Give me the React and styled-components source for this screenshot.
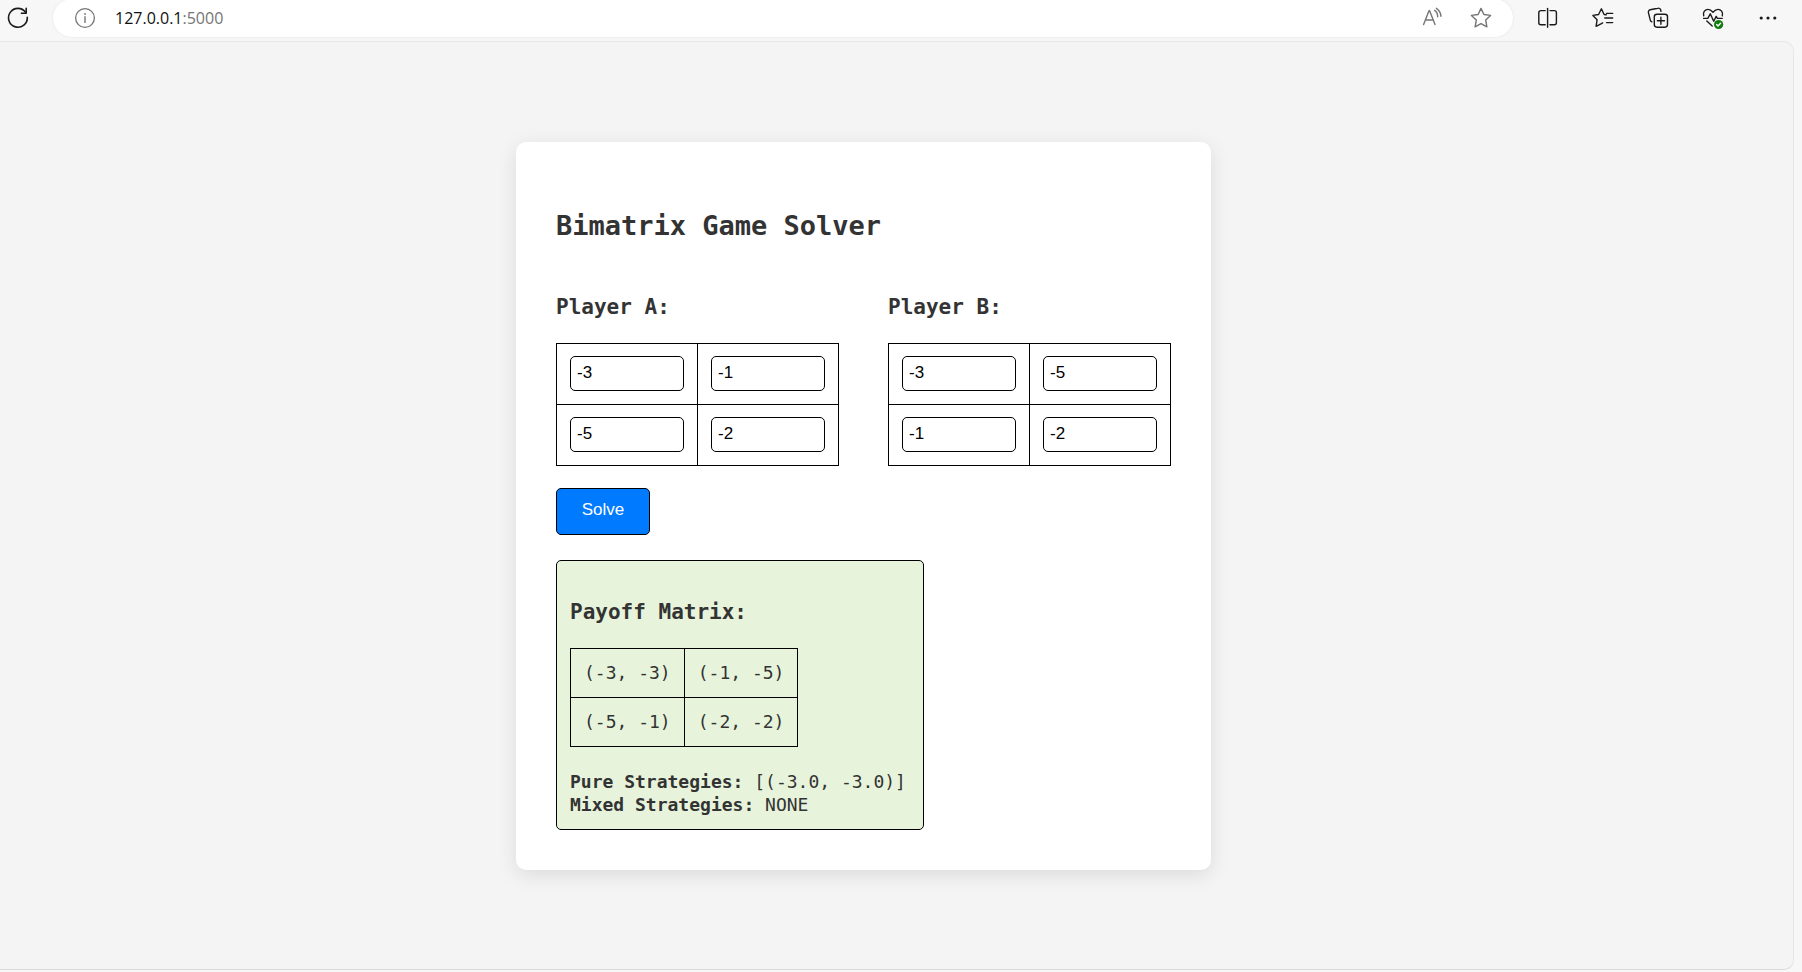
import React, { useState } from "react";
import styled, { createGlobalStyle } from "styled-components";

const GlobalStyle = createGlobalStyle`
  *, *::before, *::after { box-sizing: border-box; }
  body {
    margin: 0;
    background: #f7f7f7;
    color: #333;
    font-family: "DejaVu Sans Mono", "Liberation Mono", monospace;
    font-size: 18px;
    line-height: 23px;
  }
`;

const Browser = styled.div`
  display: flex;
  flex-direction: column;
  min-height: 100vh;
  padding-bottom: 2px;
`;

const Toolbar = styled.header`
  display: flex;
  align-items: center;
  height: 41px;
  padding: 0 7px 5px 0;
`;

const IconButton = styled.button`
  display: flex;
  align-items: center;
  justify-content: center;
  flex: none;
  width: ${(p) => p.$width}px;
  height: 24px;
  padding: 0;
  border: 0;
  background: none;
  color: ${(p) => (p.$muted ? "#757575" : "#1b1b1b")};
`;

const Icon = styled.svg.attrs({ viewBox: "0 0 24 24", "aria-hidden": true })`
  flex: none;
  width: 24px;
  height: 24px;
  overflow: visible;
  fill: none;
  stroke: currentColor;
  stroke-width: 1.4;
  stroke-linecap: round;
  stroke-linejoin: round;
`;

const AddressBar = styled.div`
  display: flex;
  flex: 1;
  align-items: center;
  gap: 26px;
  height: 38px;
  margin: 0 7px 0 17px;
  padding: 0 20px;
  border-radius: 19px;
  background: #fff;
  box-shadow: 0 0 3px rgba(0, 0, 0, 0.08);
`;

const Address = styled.div`
  display: flex;
  flex: 1;
  align-items: center;
  gap: 18px;
  font-family: "Open Sans", "Noto Sans", sans-serif;
  font-size: 16px;
  color: #757575;
`;

const Host = styled.span`
  color: #111;
`;

const Viewport = styled.main`
  display: flex;
  flex: 1;
  align-items: center;
  justify-content: center;
  margin-right: 8px;
  padding: 24px 66px 24px 0;
  border: 1px solid #e6e6e6;
  border-bottom: 1px solid #d9d9d9;
  border-left: 0;
  border-radius: 0 10px 10px 0;
  background: #f4f4f4;
`;

const Card = styled.section`
  padding: 40px;
  border-radius: 10px;
  background: #fff;
  box-shadow: 0 5px 20px rgba(0, 0, 0, 0.1);
`;

const Title = styled.h1`
  margin: 26px 0 31px;
  font-size: 27px;
  line-height: 35px;
`;

const Subtitle = styled.h2`
  margin: 20px 0 22px;
  font-size: 21px;
  line-height: 27px;
`;

const Players = styled.div`
  display: flex;
  gap: 49px;
`;

const Matrix = styled.table`
  border-collapse: collapse;
`;

const Cell = styled.td`
  padding: 12px 13px 13px;
  border: 1px solid #000;
  white-space: nowrap;
`;

const NumberField = styled.input`
  display: block;
  width: 114px;
  height: 35px;
  padding: 0 6px;
  border: 1px solid #000;
  border-radius: 5px;
  background: #fff;
  color: #000;
  font-family: "Liberation Sans", Arial, sans-serif;
  font-size: 17px;
`;

const SolveButton = styled.button`
  display: block;
  width: 94px;
  height: 47px;
  margin: 22px 0 25px;
  padding: 0 0 2px;
  border: 1px solid #000;
  border-radius: 5px;
  background: #007bff;
  color: #fff;
  font-family: "Liberation Sans", Arial, sans-serif;
  font-size: 17px;
`;

const Results = styled.section`
  width: fit-content;
  min-width: 368px;
  padding: 18px 13px 13px;
  border: 1px solid #000;
  border-radius: 5px;
  background: #e7f4db;
`;

const Strategies = styled.p`
  margin: 23px 0 0;
`;

const STAR = "M12 2.4l2.9 6.1 6.7.9-4.9 4.7 1.2 6.7-5.9-3.2-5.9 3.2 1.2-6.7-4.9-4.7 6.7-.9z";

function PlayerMatrix({ name, initial }) {
  const [values, setValues] = useState(initial);
  const update = (r, c, value) =>
    setValues(values.map((row, i) => row.map((v, j) => (i === r && j === c ? value : v))));
  return (
    <div>
      <Subtitle>{name}:</Subtitle>
      <Matrix>
        <tbody>
          {values.map((row, r) => (
            <tr key={r}>
              {row.map((value, c) => (
                <Cell key={c}>
                  <NumberField
                    type="text"
                    inputMode="numeric"
                    aria-label={`${name}, row ${r + 1}, column ${c + 1}`}
                    value={value}
                    onChange={(e) => update(r, c, e.target.value)}
                  />
                </Cell>
              ))}
            </tr>
          ))}
        </tbody>
      </Matrix>
    </div>
  );
}

const payoffs = [
  ["(-3, -3)", "(-1, -5)"],
  ["(-5, -1)", "(-2, -2)"],
];

export default function App() {
  return (
    <Browser>
      <GlobalStyle />
      <Toolbar>
        <IconButton $width={36} aria-label="Refresh">
          <Icon>
            <path d="M21.3 11.2A9.4 9.4 0 1 1 19.6 6.4" strokeWidth="1.6" />
            <path d="M20.2 2.4v4.8h-4.8" strokeWidth="1.6" />
          </Icon>
        </IconButton>
        <AddressBar>
          <Address>
            <Icon>
              <circle cx="12" cy="12" r="9.4" strokeWidth="1.3" />
              <path d="M12 10.8v5.6" />
              <circle cx="12" cy="8" r="0.9" fill="currentColor" stroke="none" />
            </Icon>
            <span>
              <Host>127.0.0.1</Host>:5000
            </span>
          </Address>
          <IconButton $width={24} $muted aria-label="Read aloud">
            <Icon>
              <path d="M4.6 18.6L10 4.8h.6L16 18.6M6.4 14h7.8" />
              <path d="M15.6 4.4c2 1.3 3.1 3.4 3.1 6.3M17.4 2.3c2.9 1.9 4.4 4.6 4.5 8" />
            </Icon>
          </IconButton>
          <IconButton $width={24} $muted aria-label="Add to favorites">
            <Icon>
              <path d={STAR} />
            </Icon>
          </IconButton>
        </AddressBar>
        <IconButton $width={55} aria-label="Split screen">
          <Icon>
            <path d="M9.2 4.6H4.8a2 2 0 0 0-2 2v10.2a2 2 0 0 0 2 2h4.4" />
            <path d="M14 4.6h4.4a2 2 0 0 1 2 2v10.2a2 2 0 0 1-2 2H14" />
            <path d="M11.6 2.4v18.8" />
          </Icon>
        </IconButton>
        <IconButton $width={55} aria-label="Favorites">
          <Icon>
            <path d="M15.2 8.8l-2.1-.3-2.7-5.7-2.8 5.7-5.7.9 4.2 4.3-1 6.7 5.3-2.8 1.2-.7" />
            <path d="M15.5 7.4h6.2M13.8 12h7.9M15.5 16.6h6.2" />
          </Icon>
        </IconButton>
        <IconButton $width={55} aria-label="Collections">
          <Icon>
            <rect x="8.3" y="8.2" width="13.2" height="13" rx="2.6" />
            <path d="M14.9 11.2v7M11.4 14.7h7" />
            <path d="M5.9 15.9a2.4 2.4 0 0 1-1.6-1.8L2.4 6.6a2.4 2.4 0 0 1 1.8-2.9l7.6-1.5a2.4 2.4 0 0 1 2.9 1.8l.3 1.4" />
          </Icon>
        </IconButton>
        <IconButton $width={55} aria-label="Browser essentials">
          <Icon>
            <path d="M2.7 9.8C1.6 6 4.2 3.4 7 3.4c2.2 0 3.4 1 5 2.8 1.6-1.8 2.8-2.8 5-2.8 2.8 0 5.4 2.6 4.3 6.4" />
            <path d="M2.6 12.4h4.2l2.5-4.6 3.4 7.4 2.5-4.8 1.2 2h4.8M5.8 15l5.4 5" />
            <circle cx="17.6" cy="18.5" r="4.6" fill="#107c10" stroke="none" />
            <path d="M15.6 18.6l1.4 1.4 2.6-2.7" stroke="#fff" />
          </Icon>
        </IconButton>
        <IconButton $width={55} aria-label="Settings and more">
          <Icon>
            <g fill="currentColor" stroke="none">
              <circle cx="5.2" cy="12" r="1.6" />
              <circle cx="12" cy="12" r="1.6" />
              <circle cx="18.8" cy="12" r="1.6" />
            </g>
          </Icon>
        </IconButton>
      </Toolbar>
      <Viewport>
        <Card>
          <Title>Bimatrix Game Solver</Title>
          <form onSubmit={(e) => e.preventDefault()}>
            <Players>
              <PlayerMatrix name="Player A" initial={[["-3", "-1"], ["-5", "-2"]]} />
              <PlayerMatrix name="Player B" initial={[["-3", "-5"], ["-1", "-2"]]} />
            </Players>
            <SolveButton type="submit">Solve</SolveButton>
          </form>
          <Results>
            <Subtitle>Payoff Matrix:</Subtitle>
            <Matrix>
              <tbody>
                {payoffs.map((row) => (
                  <tr key={row[0]}>
                    {row.map((pair) => (
                      <Cell key={pair}>{pair}</Cell>
                    ))}
                  </tr>
                ))}
              </tbody>
            </Matrix>
            <Strategies>
              <strong>Pure Strategies:</strong> [(-3.0, -3.0)]
              <br />
              <strong>Mixed Strategies:</strong> NONE
            </Strategies>
          </Results>
        </Card>
      </Viewport>
    </Browser>
  );
}
